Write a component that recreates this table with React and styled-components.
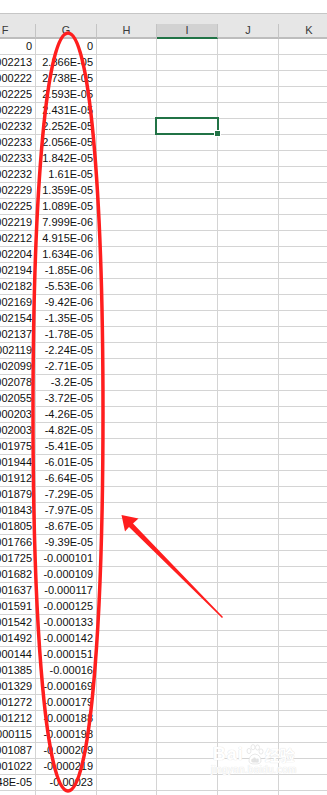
import React from "react";
import styled, { createGlobalStyle } from "styled-components";

const GlobalStyle = createGlobalStyle`
  html, body {
    margin: 0;
    padding: 0;
    background: #fff;
    overflow: hidden;
  }
  body {
    font-family: "Liberation Sans", Arial, sans-serif;
  }
`;

const F_VALUES = [
  "0", "0.0002213", "0.000222", "0.0002225", "0.0002229", "0.0002232", "0.0002233",
  "0.0002233", "0.0002232", "0.0002229", "0.0002225", "0.0002219", "0.0002212",
  "0.0002204", "0.0002194", "0.0002182", "0.0002169", "0.0002154", "0.0002137",
  "0.0002119", "0.0002099", "0.0002078", "0.0002055", "0.000203", "0.0002003",
  "0.0001975", "0.0001944", "0.0001912", "0.0001879", "0.0001843", "0.0001805",
  "0.0001766", "0.0001725", "0.0001682", "0.0001637", "0.0001591", "0.0001542",
  "0.0001492", "0.000144", "0.0001385", "0.0001329", "0.0001272", "0.0001212",
  "0.000115", "0.0001087", "0.0001022", "9.548E-05", "",
];

const G_VALUES = [
  "0", "2.866E-05", "2.738E-05", "2.593E-05", "2.431E-05", "2.252E-05", "2.056E-05",
  "1.842E-05", "1.61E-05", "1.359E-05", "1.089E-05", "7.999E-06", "4.915E-06",
  "1.634E-06", "-1.85E-06", "-5.53E-06", "-9.42E-06", "-1.35E-05", "-1.78E-05",
  "-2.24E-05", "-2.71E-05", "-3.2E-05", "-3.72E-05", "-4.26E-05", "-4.82E-05",
  "-5.41E-05", "-6.01E-05", "-6.64E-05", "-7.29E-05", "-7.97E-05", "-8.67E-05",
  "-9.39E-05", "-0.000101", "-0.000109", "-0.000117", "-0.000125", "-0.000133",
  "-0.000142", "-0.000151", "-0.00016", "-0.000169", "-0.000179", "-0.000188",
  "-0.000198", "-0.000209", "-0.000219", "-0.00023", "",
];

const COLUMNS = ["F", "G", "H", "I", "J", "K"];
const ACTIVE_COL = "I";
const ACTIVE_ROW = 5;

// squarish oval around column G
const cx = 68, cy = 412, rx = 35, ry = 379, k = 0.6;
const OVAL = `M${cx},${cy - ry}
  C${cx + rx * k},${cy - ry} ${cx + rx},${cy - ry * k} ${cx + rx},${cy}
  C${cx + rx},${cy + ry * k} ${cx + rx * k},${cy + ry} ${cx},${cy + ry}
  C${cx - rx * k},${cy + ry} ${cx - rx},${cy + ry * k} ${cx - rx},${cy}
  C${cx - rx},${cy - ry * k} ${cx - rx * k},${cy - ry} ${cx},${cy - ry} Z`;

const Page = styled.div`
  position: relative;
  width: 327px;
  height: 795px;
  overflow: hidden;
  background: #fff;
`;

const TopBar = styled.div`
  height: 13px;
  background: #fff;
  border-bottom: 1px solid #c6c6c6;
`;

const Gap = styled.div`
  height: 10px;
  background: #e6e6e6;
`;

const Sheet = styled.div`
  display: grid;
  grid-template-columns: 61px 61px 60px 61px 61px 61px;
  margin-left: -25px;
  width: 365px;
`;

const HeadCell = styled.div`
  height: 13px;
  line-height: 13px;
  box-sizing: content-box;
  background: ${(p) => (p.$active ? "#d2d2d2" : "#e6e6e6")};
  border-right: 1px solid #c4c4c4;
  border-bottom: 2px solid ${(p) => (p.$active ? "#217346" : "#bdbdbd")};
  text-align: center;
  font-size: 11px;
  color: #3a3a3a;
`;

const Cell = styled.div`
  position: relative;
  height: 15px;
  line-height: 15px;
  box-sizing: content-box;
  border-right: 1px solid #d4d4d4;
  border-bottom: 1px solid #d4d4d4;
  padding-right: 3px;
  text-align: right;
  font-size: 11px;
  color: #111;
  white-space: nowrap;
  overflow: ${(p) => (p.$clip ? "hidden" : "visible")};
  direction: ${(p) => (p.$clip ? "rtl" : "ltr")};

  ${(p) =>
    p.$selected &&
    `
    &::after {
      content: "";
      position: absolute;
      left: -2px;
      top: -2px;
      right: -2px;
      bottom: -1px;
      border: 2px solid #217346;
      z-index: 2;
    }
    &::before {
      content: "";
      position: absolute;
      right: -4px;
      bottom: -3px;
      width: 5px;
      height: 5px;
      background: #217346;
      border: 1px solid #fff;
      z-index: 3;
    }
  `}
`;

const Annotation = styled.svg`
  position: absolute;
  left: 0;
  top: 0;
  pointer-events: none;
  z-index: 5;
`;

const Watermark = styled.div`
  position: absolute;
  left: 211px;
  top: 744px;
  z-index: 4;
  display: flex;
  flex-direction: column;
  align-items: center;
  color: #fff;
  text-shadow: 0 0 1px #e0e0e0, 0 0 1px #e0e0e0;
`;

const MarkTop = styled.div`
  display: flex;
  align-items: center;
  gap: 1px;
  font-family: "Liberation Sans", Arial, sans-serif;
`;

const BrandText = styled.span`
  font-size: 18px;
  font-weight: bold;
  letter-spacing: 1px;
`;

const CnText = styled.span`
  font-family: "Noto Sans CJK SC", sans-serif;
  font-size: 15px;
  font-weight: bold;
`;

const MarkUrl = styled.div`
  font-size: 10px;
  margin-top: -1px;
  letter-spacing: 0.3px;
`;

function Paw() {
  return (
    <svg width="19" height="21" viewBox="0 0 19 21">
      <g fill="#fff" stroke="#e2e2e2" strokeWidth="0.8">
        <ellipse cx="4" cy="7" rx="2" ry="2.6" />
        <ellipse cx="8" cy="3.2" rx="2" ry="2.6" />
        <ellipse cx="12.5" cy="3.5" rx="2" ry="2.6" />
        <ellipse cx="16" cy="7.5" rx="2" ry="2.6" />
        <path d="M4 17 Q4 11 10 10 Q16 11 16 17 Q16 20 10 20 Q4 20 4 17 Z" />
      </g>
      <text x="10" y="18" fontSize="6" textAnchor="middle" fill="#fff" stroke="#e2e2e2" strokeWidth="0.4" fontFamily="Liberation Sans">du</text>
    </svg>
  );
}

export default function App() {
  const rows = G_VALUES.map((g, i) => ({ f: F_VALUES[i], g }));

  return (
    <Page>
      <GlobalStyle />
      <TopBar />
      <Gap />
      <Sheet>
        {COLUMNS.map((c) => (
          <HeadCell key={c} $active={c === ACTIVE_COL}>{c}</HeadCell>
        ))}
        {rows.map((r, i) =>
          COLUMNS.map((c) => (
            <Cell
              key={c + i}
              $clip={c === "F"}
              $selected={c === ACTIVE_COL && i === ACTIVE_ROW}
            >
              {c === "F" ? r.f : c === "G" ? r.g : ""}
            </Cell>
          ))
        )}
      </Sheet>

      <Watermark>
        <MarkTop>
          <BrandText>Bai</BrandText>
          <Paw />
          <CnText>经验</CnText>
        </MarkTop>
        <MarkUrl>jingyan.baidu.com</MarkUrl>
      </Watermark>

      <Annotation width="327" height="795" viewBox="0 0 327 795">
        <path d={OVAL} fill="none" stroke="#ff1e1e" strokeWidth="3.5" />
        <polygon
          points="121.5,515 138.5,518.5 133,523.5 223,617 222,618 129,527 125,531.5"
          fill="#ff1e1e"
        />
      </Annotation>
    </Page>
  );
}
